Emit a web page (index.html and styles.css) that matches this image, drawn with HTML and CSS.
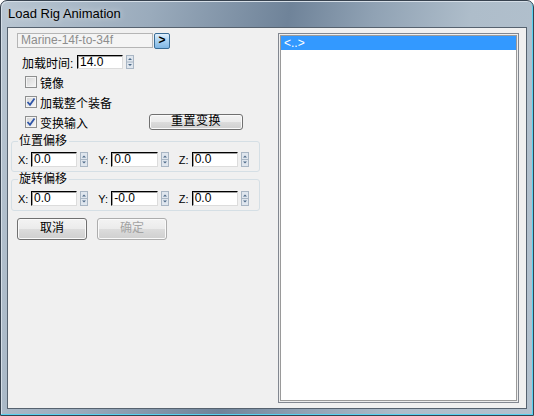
FILE: index.html
```html
<!DOCTYPE html>
<html>
<head>
<meta charset="utf-8">
<link rel="stylesheet" href="styles.css">
</head>
<body>
<div class="window">
  <div class="titlebar"><span class="title">Load Rig Animation</span></div>
  <div class="client">
    <div class="left">
      <div class="combo-row">
        <div class="combo">Marine-14f-to-34f</div>
        <div class="go">&gt;</div>
      </div>
      <div class="time-row">
        <span class="time-lbl">加载时间:</span>
        <div class="input time-input">14.0</div>
        <svg class="spin" width="8" height="14" viewBox="0 0 8 14"><rect x="0.5" y="0.5" width="7" height="13" fill="#dfe6ee" stroke="#a9b6c4"/><line x1="1" y1="7" x2="7" y2="7" stroke="#a9b6c4"/><path d="M2 5 L4 3 L6 5 Z" fill="#4e6a88"/><path d="M2 9 L4 11 L6 9 Z" fill="#4e6a88"/></svg>
      </div>
      <div class="check-row">
        <span class="cbox"></span><span class="clbl">镜像</span>
      </div>
      <div class="check-row">
        <span class="cbox"><svg width="10" height="10" viewBox="0 0 10 10"><path d="M1.5 5 L4 7.8 L8.5 1.5" fill="none" stroke="#2f55a8" stroke-width="1.8"/></svg></span><span class="clbl">加载整个装备</span>
      </div>
      <div class="check-row">
        <span class="cbox"><svg width="10" height="10" viewBox="0 0 10 10"><path d="M1.5 5 L4 7.8 L8.5 1.5" fill="none" stroke="#2f55a8" stroke-width="1.8"/></svg></span><span class="clbl">变换输入</span>
        <div class="btn reset">重置变换</div>
      </div>
      <fieldset class="group g1">
        <legend>位置偏移</legend>
        <div class="xyz">
          <span class="axis">X:</span><div class="input val">0.0</div><svg class="spin" width="8" height="15" viewBox="0 0 8 15"><rect x="0.5" y="0.5" width="7" height="14" fill="#dfe6ee" stroke="#a9b6c4"/><line x1="1" y1="7.5" x2="7" y2="7.5" stroke="#a9b6c4"/><path d="M2 5.5 L4 3.5 L6 5.5 Z" fill="#4e6a88"/><path d="M2 9.5 L4 11.5 L6 9.5 Z" fill="#4e6a88"/></svg>
          <span class="axis">Y:</span><div class="input val">0.0</div><svg class="spin" width="8" height="15" viewBox="0 0 8 15"><rect x="0.5" y="0.5" width="7" height="14" fill="#dfe6ee" stroke="#a9b6c4"/><line x1="1" y1="7.5" x2="7" y2="7.5" stroke="#a9b6c4"/><path d="M2 5.5 L4 3.5 L6 5.5 Z" fill="#4e6a88"/><path d="M2 9.5 L4 11.5 L6 9.5 Z" fill="#4e6a88"/></svg>
          <span class="axis">Z:</span><div class="input val">0.0</div><svg class="spin" width="8" height="15" viewBox="0 0 8 15"><rect x="0.5" y="0.5" width="7" height="14" fill="#dfe6ee" stroke="#a9b6c4"/><line x1="1" y1="7.5" x2="7" y2="7.5" stroke="#a9b6c4"/><path d="M2 5.5 L4 3.5 L6 5.5 Z" fill="#4e6a88"/><path d="M2 9.5 L4 11.5 L6 9.5 Z" fill="#4e6a88"/></svg>
        </div>
      </fieldset>
      <fieldset class="group g2">
        <legend>旋转偏移</legend>
        <div class="xyz">
          <span class="axis">X:</span><div class="input val">0.0</div><svg class="spin" width="8" height="15" viewBox="0 0 8 15"><rect x="0.5" y="0.5" width="7" height="14" fill="#dfe6ee" stroke="#a9b6c4"/><line x1="1" y1="7.5" x2="7" y2="7.5" stroke="#a9b6c4"/><path d="M2 5.5 L4 3.5 L6 5.5 Z" fill="#4e6a88"/><path d="M2 9.5 L4 11.5 L6 9.5 Z" fill="#4e6a88"/></svg>
          <span class="axis">Y:</span><div class="input val">-0.0</div><svg class="spin" width="8" height="15" viewBox="0 0 8 15"><rect x="0.5" y="0.5" width="7" height="14" fill="#dfe6ee" stroke="#a9b6c4"/><line x1="1" y1="7.5" x2="7" y2="7.5" stroke="#a9b6c4"/><path d="M2 5.5 L4 3.5 L6 5.5 Z" fill="#4e6a88"/><path d="M2 9.5 L4 11.5 L6 9.5 Z" fill="#4e6a88"/></svg>
          <span class="axis">Z:</span><div class="input val">0.0</div><svg class="spin" width="8" height="15" viewBox="0 0 8 15"><rect x="0.5" y="0.5" width="7" height="14" fill="#dfe6ee" stroke="#a9b6c4"/><line x1="1" y1="7.5" x2="7" y2="7.5" stroke="#a9b6c4"/><path d="M2 5.5 L4 3.5 L6 5.5 Z" fill="#4e6a88"/><path d="M2 9.5 L4 11.5 L6 9.5 Z" fill="#4e6a88"/></svg>
        </div>
      </fieldset>
      <div class="buttons">
        <div class="btn big">取消</div>
        <div class="btn big disabled">确定</div>
      </div>
    </div>
    <div class="list">
      <div class="item selected">&lt;..&gt;</div>
    </div>
  </div>
</div>
</body>
</html>
```

FILE: styles.css
```css
* { box-sizing: border-box; }
html, body { margin: 0; padding: 0; }
body {
  width: 534px;
  height: 416px;
  overflow: hidden;
  font-family: "Liberation Sans", "Noto Sans CJK SC", sans-serif;
  font-size: 12px;
  color: #000;
}
.window {
  width: 534px;
  height: 416px;
  border: 1px solid #37424f;
  border-radius: 7px 7px 0 0;
  background: linear-gradient(100deg, #b9c6d2 0%, #9aabbc 25%, #6f8399 48%, #90a2b4 62%, #aebdca 78%, #b3c1ce 100%);
  box-shadow: inset -1px -1px 0 #56d2f0, inset 1px 1px 0 #d5dee7;
  display: flex;
  flex-direction: column;
}
.titlebar {
  height: 26px;
  line-height: 26px;
  padding-left: 7px;
}
.title {
  font-size: 13px;
  color: #000;
  text-shadow: 0 0 6px rgba(255,255,255,0.7);
}
.client {
  margin: 0 6px 6px 6px;
  flex: 1;
  border: 1px solid #56626f;
  background: #f0f0f0;
  display: flex;
}
.left {
  width: 270px;
  flex: none;
}
.combo-row {
  display: flex;
  margin: 5px 0 0 9px;
  height: 16px;
}
.combo {
  width: 136px;
  height: 15px;
  border: 1px solid #b5b5b5;
  background: #f4f4f4;
  color: #8d8d8d;
  line-height: 13px;
  padding-left: 3px;
  font-size: 12px;
}
.go {
  margin-left: 1px;
  width: 16px;
  height: 16px;
  border: 1px solid #3a6d96;
  border-radius: 2px;
  background: linear-gradient(#e0f0fd, #a9d1f1 50%, #7fb6e3);
  font-weight: bold;
  font-size: 12px;
  line-height: 13px;
  text-align: center;
  color: #000;
}
.time-row {
  display: flex;
  align-items: center;
  margin: 6px 0 0 14px;
  height: 14px;
}
.time-lbl {
  width: 55px;
  font-size: 12px;
}
.input {
  height: 14px;
  background: #fff;
  border-top: 1px solid #000;
  border-left: 1px solid #000;
  border-right: 1px solid #dcdcdc;
  border-bottom: 1px solid #dcdcdc;
  box-shadow: inset 1px 1px 0 #a0a0a0;
  font-size: 12px;
  line-height: 12px;
  padding-left: 2px;
}
.time-input {
  width: 46px;
}
.spin {
  display: block;
  margin-left: 3px;
  flex: none;
}
.check-row {
  display: flex;
  align-items: center;
  height: 20px;
  margin-left: 17px;
}
.time-row + .check-row { margin-top: 3px; }
.cbox {
  width: 12px;
  height: 12px;
  border: 1px solid #8e8f8f;
  background: linear-gradient(135deg, #d4d4d4, #f6f6f6);
  box-shadow: inset 0 0 0 1px #f4f4f4;
  display: flex;
  align-items: center;
  justify-content: center;
  flex: none;
}
.cbox svg { display: block; }
.clbl {
  margin-left: 3px;
  font-size: 12px;
}
.btn {
  border: 1px solid #707070;
  border-radius: 3px;
  background: linear-gradient(#f3f3f3 0%, #ebebeb 50%, #dcdcdc 51%, #cfcfcf 100%);
  box-shadow: inset 0 0 0 1px #fafafa;
  text-align: center;
  font-size: 12px;
}
.reset {
  margin-left: auto;
  margin-right: 35px;
  width: 94px;
  height: 16px;
  line-height: 13px;
  letter-spacing: 0.5px;
}
.group {
  margin: 0 0 0 3px;
  width: 249px;
  border: 1px solid #d5dfe5;
  border-radius: 3px;
  padding: 4px 0 4px 6px;
  min-width: 0;
}
.g1 { margin-top: 2px; }
.g2 { padding-top: 5px; }
.group legend {
  padding: 0 2px 0 1px;
  margin-left: 0;
  font-size: 12px;
  line-height: 14px;
  height: 14px;
}
.xyz {
  display: flex;
  align-items: center;
  height: 15px;
}
.axis {
  width: 13px;
  font-size: 11px;
  flex: none;
}
.val {
  width: 48px;
  height: 15px;
  line-height: 13px;
}
.xyz .spin { margin-right: 10px; }
.buttons {
  display: flex;
  gap: 10px;
  margin: 7px 0 0 9px;
}
.big {
  width: 70px;
  height: 22px;
  line-height: 19px;
}
.disabled {
  color: #a3a3a3;
  border-color: #adadad;
}
.list {
  margin-top: 5px;
  width: 241px;
  height: 370px;
  border: 1px solid #828790;
  background: #fff;
  box-shadow: inset 0 0 0 1px #eeeeee, inset 0 0 0 2px #9a9a9a;
  padding: 2px;
}
.item {
  height: 14px;
  line-height: 14px;
  padding-left: 3px;
  font-size: 12px;
}
.selected {
  background: #3399ff;
  color: #fff;
}
```
